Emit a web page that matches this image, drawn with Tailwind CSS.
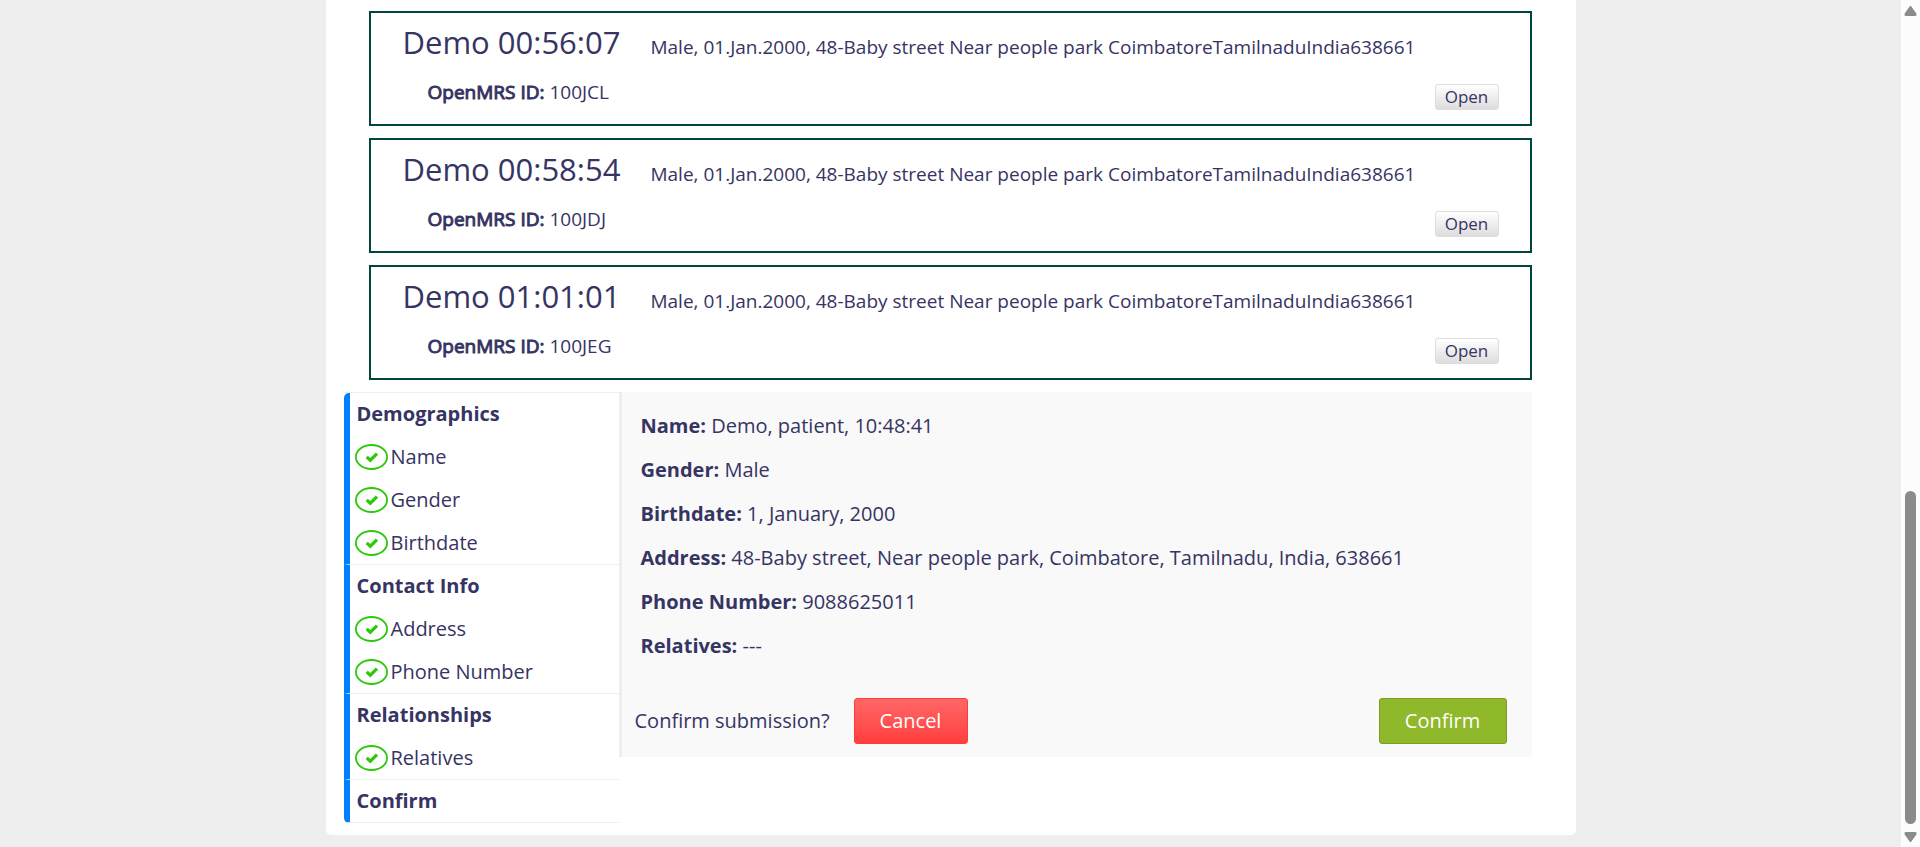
<!DOCTYPE html>
<html lang="en">
<head>
<meta charset="utf-8">
<title>Patient registration</title>
<script src="https://cdn.jsdelivr.net/npm/@tailwindcss/browser@4"></script>
</head>
<body class="flex bg-[#eeeeee] font-['Open_Sans','Noto_Sans',sans-serif] text-xl font-normal text-[#363463]">
<svg class="hidden" aria-hidden="true">
  <symbol id="check" viewBox="0 0 33 26">
    <ellipse cx="16.5" cy="13" rx="15.6" ry="12" fill="none" stroke="#2bc80b" stroke-width="1.8"/>
    <path d="M11.700 12.800 L15.3 16.2 L22 9.600" fill="none" stroke="#2bc80b" stroke-width="3.2"/>
  </symbol>
</svg>
<div class="min-w-0 flex-1 pb-3">
  <main class="mx-auto max-w-[1250px] rounded-b-[5px] bg-white pt-[11px] pr-11 pb-3 pl-[18px]">
    <section class="flex flex-col gap-3 pl-[25px]" aria-label="Similar patients">
      <article class="flex h-[115px] flex-col border-2 border-[#00463f] pr-[31px] pl-8">
        <div class="flex items-baseline gap-[30px] pt-[7px]">
          <h2 class="text-[31px] leading-[44px]">Demo 00:56:07</h2>
          <p class="text-[19px]">Male, 01.Jan.2000, 48-Baby street Near people park CoimbatoreTamilnaduIndia638661</p>
        </div>
        <div class="flex justify-between pl-[25px]">
          <p class="pt-[13px] text-[19px] leading-[30px]"><strong class="font-normal [-webkit-text-stroke:1px]">OpenMRS ID:</strong> 100JCL</p>
          <button class="mt-5 h-[26px] w-16 rounded-[3px] border border-[#dddddd] bg-linear-to-b from-white to-[#dddddd] text-[17px] leading-6">Open</button>
        </div>
      </article>
      <article class="flex h-[115px] flex-col border-2 border-[#00463f] pr-[31px] pl-8">
        <div class="flex items-baseline gap-[30px] pt-[7px]">
          <h2 class="text-[31px] leading-[44px]">Demo 00:58:54</h2>
          <p class="text-[19px]">Male, 01.Jan.2000, 48-Baby street Near people park CoimbatoreTamilnaduIndia638661</p>
        </div>
        <div class="flex justify-between pl-[25px]">
          <p class="pt-[13px] text-[19px] leading-[30px]"><strong class="font-normal [-webkit-text-stroke:1px]">OpenMRS ID:</strong> 100JDJ</p>
          <button class="mt-5 h-[26px] w-16 rounded-[3px] border border-[#dddddd] bg-linear-to-b from-white to-[#dddddd] text-[17px] leading-6">Open</button>
        </div>
      </article>
      <article class="flex h-[115px] flex-col border-2 border-[#00463f] pr-[31px] pl-8">
        <div class="flex items-baseline gap-[30px] pt-[7px]">
          <h2 class="text-[31px] leading-[44px]">Demo 01:01:01</h2>
          <p class="text-[19px]">Male, 01.Jan.2000, 48-Baby street Near people park CoimbatoreTamilnaduIndia638661</p>
        </div>
        <div class="flex justify-between pl-[25px]">
          <p class="pt-[13px] text-[19px] leading-[30px]"><strong class="font-normal [-webkit-text-stroke:1px]">OpenMRS ID:</strong> 100JEG</p>
          <button class="mt-5 h-[26px] w-16 rounded-[3px] border border-[#dddddd] bg-linear-to-b from-white to-[#dddddd] text-[17px] leading-6">Open</button>
        </div>
      </article>
    </section>
    <div class="flex items-start pt-3">
      <nav class="w-[275px] shrink-0 border-t border-[#eeeeee]" aria-label="Form sections">
        <div class="border-b border-l-6 border-b-[#eeeeee] border-l-[#007fff] rounded-tl-[5px] pl-[5px]">
          <h3 class="pl-0.5 font-bold leading-[42px]">Demographics</h3>
          <ul class="leading-[43px]">
            <li class="flex items-center gap-[3px]"><svg class="h-[26px] w-[33px]"><use href="#check"/></svg>Name</li>
            <li class="flex items-center gap-[3px]"><svg class="h-[26px] w-[33px]"><use href="#check"/></svg>Gender</li>
            <li class="flex items-center gap-[3px]"><svg class="h-[26px] w-[33px]"><use href="#check"/></svg>Birthdate</li>
          </ul>
        </div>
        <div class="border-b border-l-6 border-b-[#eeeeee] border-l-[#007fff] pl-[5px]">
          <h3 class="pl-0.5 font-bold leading-[42px]">Contact Info</h3>
          <ul class="leading-[43px]">
            <li class="flex items-center gap-[3px]"><svg class="h-[26px] w-[33px]"><use href="#check"/></svg>Address</li>
            <li class="flex items-center gap-[3px]"><svg class="h-[26px] w-[33px]"><use href="#check"/></svg>Phone Number</li>
          </ul>
        </div>
        <div class="border-b border-l-6 border-b-[#eeeeee] border-l-[#007fff] pl-[5px]">
          <h3 class="pl-0.5 font-bold leading-[42px]">Relationships</h3>
          <ul class="leading-[43px]">
            <li class="flex items-center gap-[3px]"><svg class="h-[26px] w-[33px]"><use href="#check"/></svg>Relatives</li>
          </ul>
        </div>
        <div class="border-b border-l-6 border-b-[#eeeeee] border-l-[#007fff] rounded-bl-[5px] pl-[5px]">
          <h3 class="pl-0.5 font-bold leading-[42px]">Confirm</h3>
        </div>
      </nav>
      <form class="min-w-0 flex-1 border-l-3 border-[#eeeeee] bg-[#f9f9f9] pt-3 pr-[25px] pb-[13px] pl-[13px]">
        <div class="pl-[6px] leading-[44px]">
          <p><strong class="font-bold">Name:</strong> Demo, patient, 10:48:41</p>
          <p><strong class="font-bold">Gender:</strong> Male</p>
          <p><strong class="font-bold">Birthdate:</strong> 1, January, 2000</p>
          <p><strong class="font-bold">Address:</strong> 48-Baby street, Near people park, Coimbatore, Tamilnadu, India, 638661</p>
          <p><strong class="font-bold">Phone Number:</strong> 9088625011</p>
          <p><strong class="font-bold">Relatives:</strong> ---</p>
        </div>
        <div class="flex items-center pt-[30px]">
          <p class="w-[219px]">Confirm submission?</p>
          <button type="button" class="h-[46px] w-[114px] rounded-[3px] border border-[#ff3d3d] bg-linear-to-b from-[#ff6666] to-[#ff3d3d] text-white">Cancel</button>
          <button type="button" class="ml-auto h-[46px] w-32 rounded-[3px] border border-[#7a9e25] bg-[#8fb82a] text-white">Confirm</button>
        </div>
      </form>
    </div>
  </main>
</div>
<aside class="sticky top-0 flex h-screen w-[19px] shrink-0 flex-col items-center bg-[#fcfcfc] pt-[6px] pb-[5px]" aria-hidden="true">
  <svg class="h-[10px] w-[13px]" viewBox="0 0 13 10"><path d="M5.6.6Q6.500-.4 7.400.6L12.300 7.600Q13 9.700 11.500 10H1.500Q0 9.700.7 7.600Z" fill="#8b8b8b"/></svg>
  <div class="flex-1"></div>
  <div class="h-[333px] w-[11px] rounded-full bg-[#8b8b8b]"></div>
  <svg class="mt-2 h-[10px] w-[13px]" viewBox="0 0 13 10"><path d="M5.6 9.400Q6.500 10.400 7.400 9.400L12.300 2.400Q13 .3 11.500 0H1.500Q0 .3.7 2.400Z" fill="#8b8b8b"/></svg>
</aside>
</body>
</html>
